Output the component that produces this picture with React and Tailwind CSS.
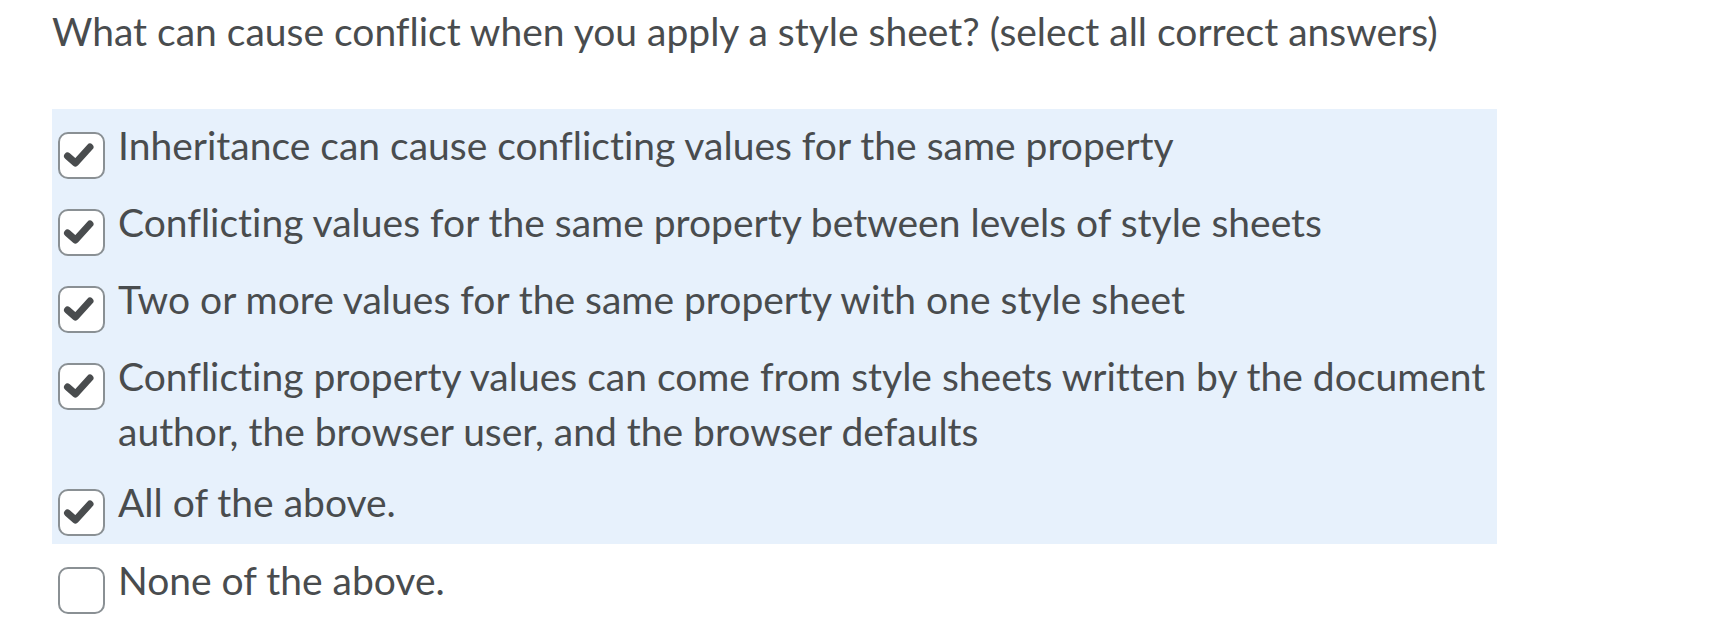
import React from "react";

function Check({ checked }) {
  return (
    <div className="w-[47px] h-[47px] shrink-0 mt-[14px] rounded-[10px] border-2 border-[#8a9094] bg-white flex items-center justify-center">
      {checked && (
        <svg width="47" height="47" viewBox="0 0 47 47" className="shrink-0">
          <path d="M11.5 26 L19.5 33 L34 17" fill="none" stroke="#494c4e" strokeWidth="7" strokeLinecap="round" strokeLinejoin="round" transform="translate(-2 -2)" />
        </svg>
      )}
    </div>
  );
}

function Row({ checked, children }) {
  return (
    <div className="flex items-start gap-[13px] pl-[6px] pt-[9px] pb-[7px]">
      <Check checked={checked} />
      <div className="text-[39px] leading-[55px] whitespace-nowrap [font-variant-ligatures:none]">{children}</div>
    </div>
  );
}

export default function App() {
  return (
    <div
      className="min-h-[623px] w-[1733px] bg-white text-[#494c4e] pl-[52px] pt-[4px]"
      style={{ fontFamily: "Lato, 'Noto Sans', sans-serif" }}
    >
      <div className="text-[39px] leading-[55px] whitespace-nowrap [font-variant-ligatures:none]">
        What can cause conflict when you apply a style sheet? (select all correct answers)
      </div>
      <div className="mt-[50px] w-[1445px] bg-[#e7f1fc] pb-[1px]">
        <Row checked>Inheritance can cause conflicting values for the same property</Row>
        <Row checked>Conflicting values for the same property between levels of style sheets</Row>
        <Row checked>Two or more values for the same property with one style sheet</Row>
        <Row checked>
          Conflicting property values can come from style sheets written by the document
          <br />
          author, the browser user, and the browser defaults
        </Row>
        <Row checked>All of the above.</Row>
      </div>
      <Row checked={false}>None of the above.</Row>
    </div>
  );
}
